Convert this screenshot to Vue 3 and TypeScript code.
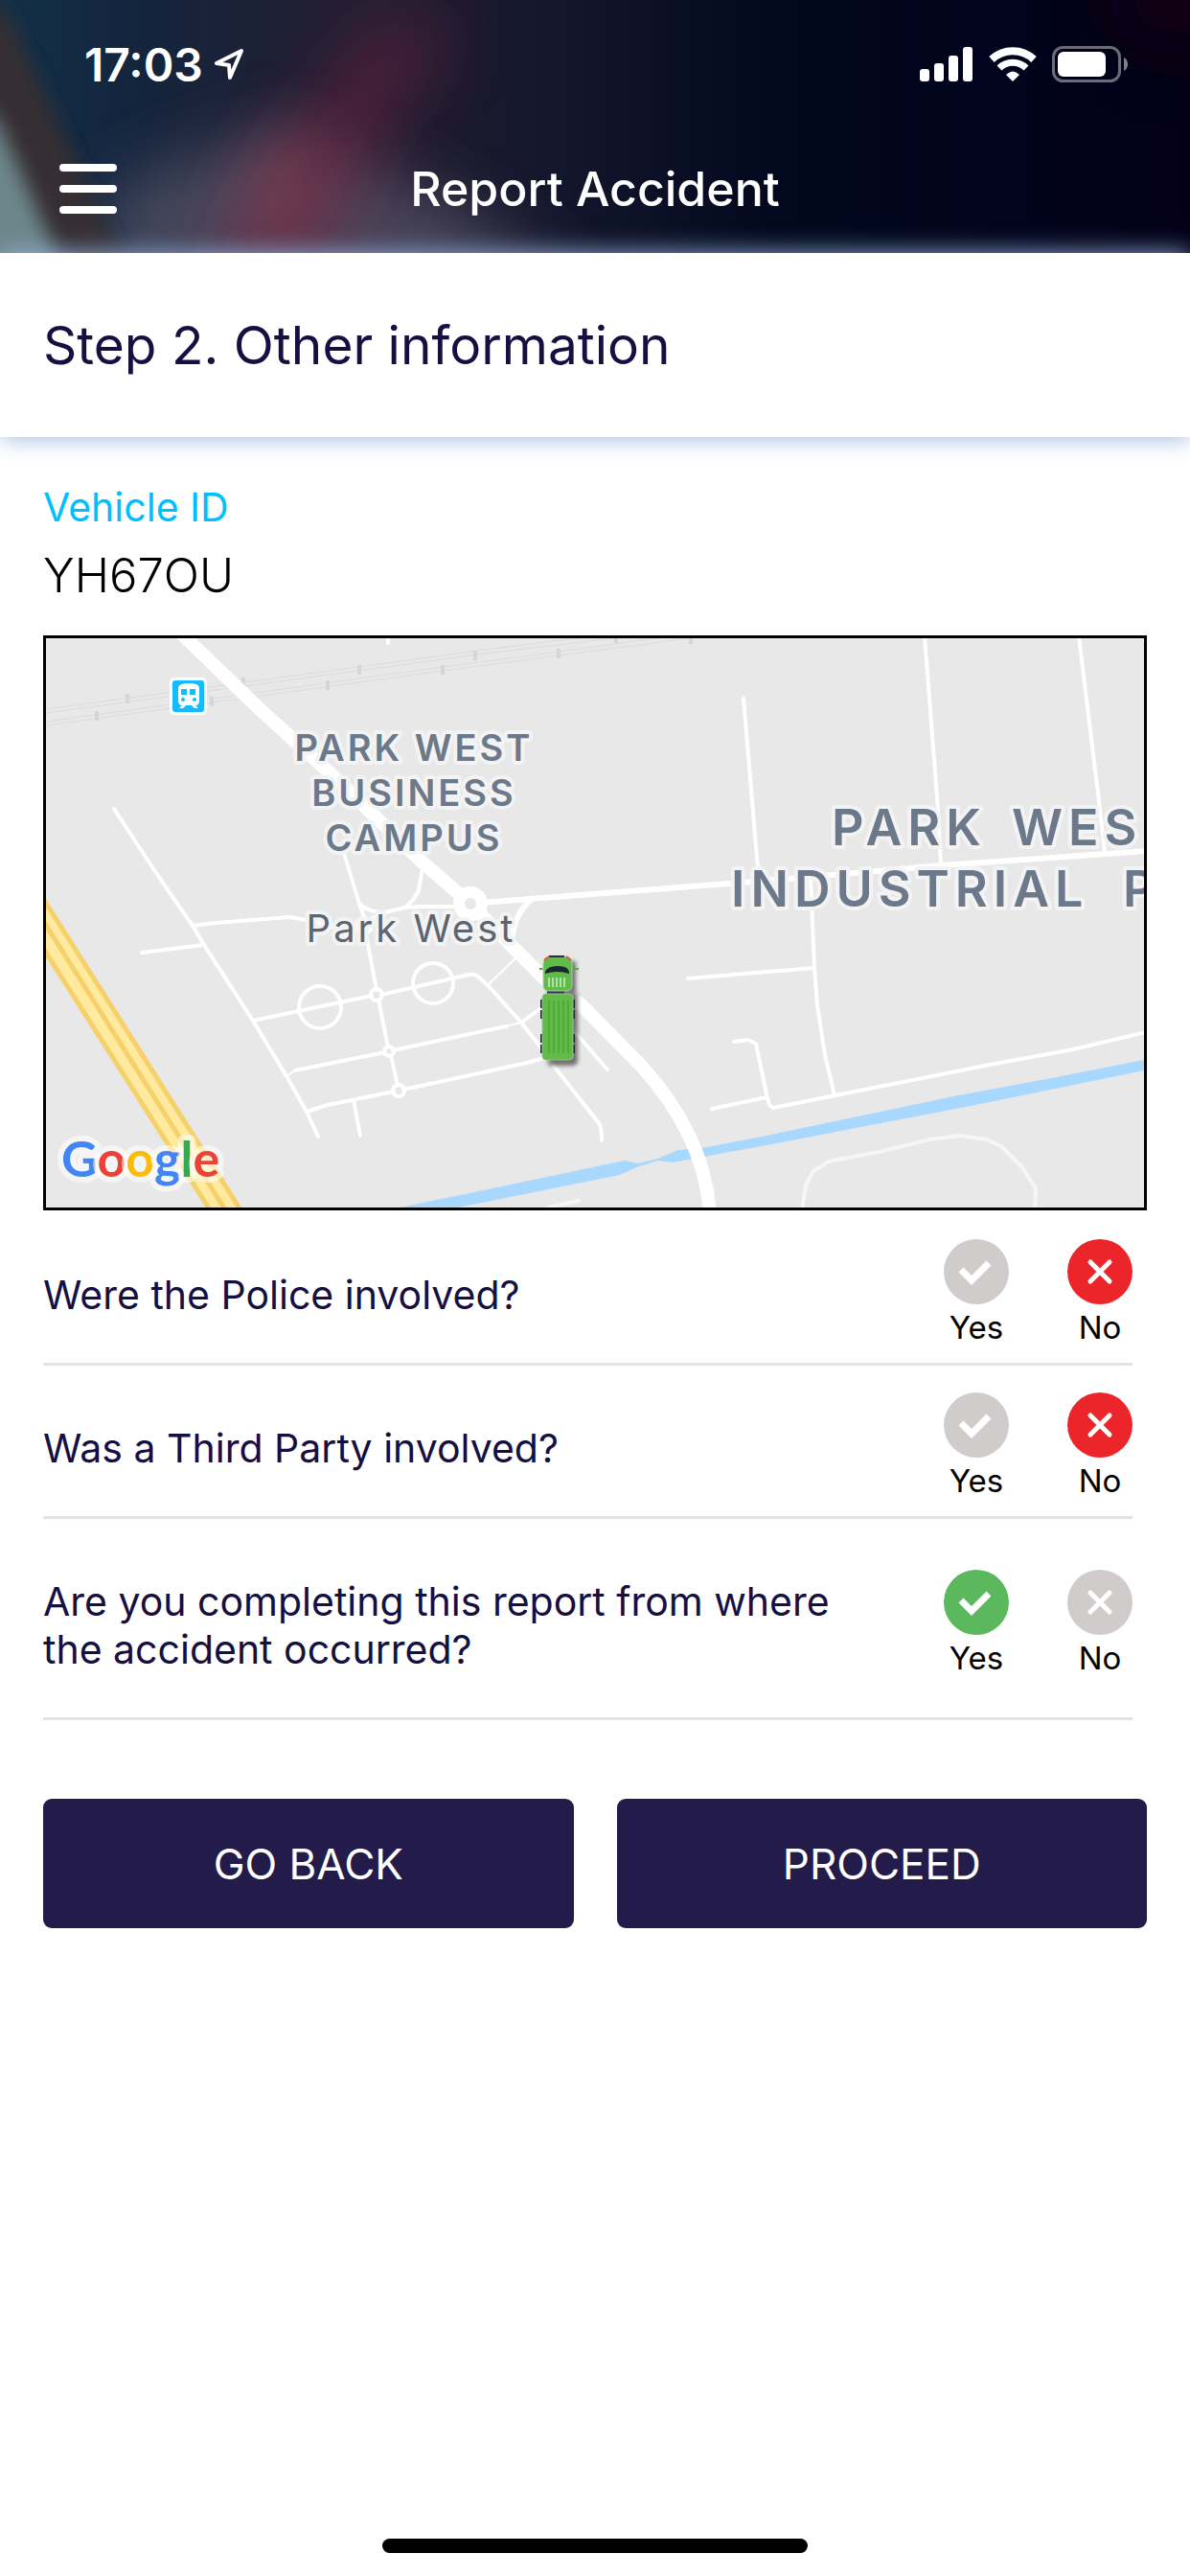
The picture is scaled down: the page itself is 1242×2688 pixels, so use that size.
<script setup lang="ts">
import { ref } from 'vue'

type Answer = 'yes' | 'no'

interface Question {
  id: string
  text: string
  answer: Answer
}

const questions = ref<Question[]>([
  { id: 'police', text: 'Were the Police involved?', answer: 'no' },
  { id: 'third-party', text: 'Was a Third Party involved?', answer: 'no' },
  { id: 'location', text: 'Are you completing this report from where the accident occurred?', answer: 'yes' },
])

const sleepers: [number, number][] = [
  [85, 63], [53, 81], [173, 66], [206, 46], [294, 49], [327, 33],
  [414, 33], [448, 18], [535, 16], [595, 0], [673, 1],
]

const minorRoads: string[] = [
  'M357 -4V5',
  'M71 178L117 248L153 300L165 320L216 399L251 457L272 494L284 520',
  'M153 300L177 297L254 291L279 295L302 302L324 301',
  'M100 328L165 320',
  'M310 221L327 277L332 291M334 309L345 367M347 377L357 427M360 435L367 467',
  'M327 277Q336 286 354 286L375 281L392 280H430M354 286L340 292',
  'M393 240L389 263L384 272L375 281',
  'M216 399L340 373M350 372L402 360L441 351Q447 350 451 353L462 363L496 401L515 425L529 445L577 506Q580 510 580 524',
  'M260 451L354 432M362 430L480 405M496 401L525 380',
  'M272 494L294 487L363 473M373 471L502 443L530 435',
  'M321 482L328 519',
  'M728 63L744 253',
  'M552 411L586 450',
  'M670 355L802 344',
  'M798 249L802 344L805 383L813 435L823 477',
  'M917 -2L930 166L934 236',
  'M1078 -2L1099 170L1105 223',
  'M718 421L733 419L741 423L752 476L755 487L759 490L824 477L985 445L1072 429L1148 411',
  'M695 491L752 479',
]
</script>

<template>
  <div class="screen">
    <header class="header">
      <svg class="backdrop" viewBox="0 0 1242 264" preserveAspectRatio="none" aria-hidden="true">
        <defs>
          <linearGradient id="night" x1="0" x2="1" y1="0" y2="0">
            <stop offset="0" stop-color="#12304a" />
            <stop offset="0.12" stop-color="#14243c" />
            <stop offset="0.3" stop-color="#241e32" />
            <stop offset="0.48" stop-color="#12162c" />
            <stop offset="0.65" stop-color="#02081e" />
            <stop offset="0.85" stop-color="#01041c" />
            <stop offset="1" stop-color="#040018" />
          </linearGradient>
          <filter id="soft" x="-50%" y="-50%" width="200%" height="200%"><feGaussianBlur stdDeviation="10" /></filter>
          <filter id="softer" x="-100%" y="-100%" width="300%" height="300%"><feGaussianBlur stdDeviation="34" /></filter>
        </defs>
        <rect width="1242" height="264" fill="url(#night)" />
        <path d="M90 290L130 190L300 130L480 220L600 300Z" fill="#5a566a" opacity="0.75" filter="url(#softer)" />
        <path d="M215 300L300 140L400 20L480 30L400 130L330 290Z" fill="#6a2440" opacity="0.6" filter="url(#softer)" />
        <ellipse cx="290" cy="200" rx="34" ry="66" fill="#a04450" opacity="0.4" filter="url(#softer)" transform="rotate(22 290 200)" />
        <path d="M-30 10L6 10L140 300L-30 300Z" fill="#362d31" filter="url(#soft)" />
        <path d="M-40 90L0 130L74 300L-40 300Z" fill="#6d868a" filter="url(#soft)" />
        <ellipse cx="1242" cy="0" rx="90" ry="60" fill="#120010" opacity="0.7" filter="url(#softer)" />
      </svg>

      <div class="status">
        <div class="clock">
          <span>17:03</span>
          <svg width="34" height="36" viewBox="0 0 34 36" aria-hidden="true">
            <path d="M30 4L4 17L17 19L18 32Z" fill="none" stroke="#fff" stroke-width="4" stroke-linejoin="round" />
          </svg>
        </div>
        <div class="signals">
          <svg width="56" height="38" viewBox="0 0 56 38" fill="#fff" aria-hidden="true">
            <rect x="0" y="24" width="10" height="13" rx="3" />
            <rect x="15" y="18" width="10" height="19" rx="3" />
            <rect x="30" y="10" width="10" height="27" rx="3" />
            <rect x="45" y="1" width="10" height="36" rx="3" />
          </svg>
          <svg width="50" height="38" viewBox="0 0 50 38" aria-hidden="true">
            <path d="M3 14A32 32 0 0 1 47 14" fill="none" stroke="#fff" stroke-width="8" />
            <path d="M11 23A20 20 0 0 1 39 23" fill="none" stroke="#fff" stroke-width="7" />
            <path d="M18 30Q25 23 32 30L25 37Z" fill="#fff" />
          </svg>
          <svg width="80" height="38" viewBox="0 0 80 38" aria-hidden="true">
            <rect x="1.5" y="1.5" width="69" height="35" rx="10" fill="none" stroke="#fff" stroke-opacity="0.42" stroke-width="3" />
            <rect x="6" y="6" width="50" height="26" rx="6" fill="#fff" />
            <path d="M75 12Q79 14 79 19T75 26Z" fill="#fff" fill-opacity="0.5" />
          </svg>
        </div>
      </div>

      <nav class="nav">
        <button class="menu" type="button" aria-label="Menu">
          <span></span><span></span><span></span>
        </button>
        <h1>Report Accident</h1>
      </nav>
    </header>

    <section class="step">
      <h2>Step 2. Other information</h2>
    </section>

    <main class="content">
      <dl class="vehicle">
        <dt>Vehicle ID</dt>
        <dd>YH67OU</dd>
      </dl>

      <div class="map">
        <svg viewBox="0 0 1146 594" preserveAspectRatio="xMidYMid slice" role="img" aria-label="Map of vehicle location">
          <rect width="1146" height="594" fill="#e8e8e8" />
          <g fill="none" stroke="#dadcdc" stroke-width="1">
            <path d="M0 74L392 21L449 13L570 -2" />
            <path d="M0 78L392 25L449 17L600 -1" />
            <path d="M0 87L392 33L535 14L650 -2" />
            <path d="M0 91L392 37L535 18L680 -1" />
          </g>
          <rect v-for="[x, y] in sleepers" :key="`${x}-${y}`" :x="x - 2" :y="y - 5" width="4" height="10" fill="#d4d6db" />

          <path d="M369 594L452 577L604 545L617 548L639 543L659 534L685 532L752 519L952 477L1039 461L1146 440V451L985 484L752 529L654 547L639 545L619 551L599 560L430 594Z" fill="#a9d8ff" />

          <path d="M0 274L204 594H169L0 330Z" fill="#ffeaa0" />
          <path d="M-4 270L204 598M-4 322L172 598M-4 293L188 598" fill="none" stroke="#f6d06b" stroke-width="5" />

          <g fill="none" stroke="#fff" stroke-linecap="round" stroke-linejoin="round">
            <path v-for="road in minorRoads" :key="road" :d="road" stroke-width="4" />
            <path d="M251 457L260 451M480 405L496 401M490 334L461 362" stroke-width="2" />
            <path d="M505 274Q486 292 487 316" stroke-width="6" />
            <path d="M455 276L505 272L752 253L935 237L1150 222" stroke-width="6" />
            <path d="M789 598L793 571L801 556L817 546L869 536L922 523L954 519L982 523L997 530L1019 552L1033 574L1032 598M525 594L532 592L556 587" stroke="#f6f6f6" stroke-width="4" />
            <path d="M140 -6L222 73L300 144L392 233L443 277L485 320L519 354L559 383L622 447C650 478 688 530 693 600" stroke-width="14" stroke-linecap="butt" />
            <circle cx="286" cy="385" r="22" stroke-width="4" />
            <circle cx="404" cy="360" r="21" stroke-width="4" />
            <circle cx="332" cy="300" r="8" stroke-width="4" />
            <circle cx="345" cy="372" r="6" stroke-width="4" />
            <circle cx="358" cy="431" r="5" stroke-width="4" />
            <circle cx="368" cy="472" r="6" stroke-width="4" />
            <circle cx="443" cy="277" r="12" fill="#e8e8e8" stroke-width="12" />
          </g>

          <g>
            <rect x="129" y="41" width="39" height="39" rx="5" fill="#fff" />
            <rect x="132" y="44" width="33" height="33" rx="3" fill="#12bcff" />
            <path d="M138 52Q138 47 149 47T160 52V65Q160 70 156 70L159 73H155L152 70H146L143 73H139L142 70Q138 70 138 65Z" fill="#fff" />
            <path d="M141 53H147V59H141ZM150 53H156V59H150Z" fill="#12bcff" />
            <circle cx="143" cy="64" r="2" fill="#12bcff" />
            <circle cx="155" cy="64" r="2" fill="#12bcff" />
          </g>

          <g class="label area">
            <text x="384" y="128">PARK WEST</text>
            <text x="384" y="175">BUSINESS</text>
            <text x="384" y="222">CAMPUS</text>
          </g>
          <text class="label place" x="381" y="317">Park West</text>
          <g class="label district">
            <text y="216"><tspan x="820">PARK </tspan><tspan x="1008">WES</tspan></text>
            <text y="280"><tspan x="715">INDUSTRIAL </tspan><tspan x="1124">P</tspan></text>
          </g>

          <g>
            <path d="M524 337H553V371H555V440Q555 446 549 446H524Z" fill="#222" opacity="0.6" class="shade" />
            <path d="M515 345H556" stroke="#4cae3b" stroke-width="2" />
            <rect x="523" y="364" width="18" height="8" fill="#2a3640" />
            <g fill="#1c2638">
              <rect x="516" y="377" width="36" height="9" />
              <rect x="516" y="388" width="36" height="9" />
              <rect x="516" y="413" width="36" height="9" />
              <rect x="516" y="424" width="36" height="9" />
            </g>
            <path d="M519 340Q519 332 528 332H540Q549 332 549 340V362Q549 368 543 368H525Q519 368 519 362Z" fill="#5fbc46" stroke="#b9c4b4" stroke-width="1" />
            <path d="M525 332H541" stroke="#24303c" stroke-width="2" />
            <path d="M520 336L525 332M548 336L543 332" stroke="#e0553c" stroke-width="2" />
            <path d="M521 350V348Q523 342 534 342T546 348V350Q534 346 521 350Z" fill="#1c2638" />
            <path d="M525 354V364M529 354V364M533 354V364M537 354V364M541 354V364" stroke="#b8dfae" stroke-width="2" />
            <rect x="518" y="371" width="32" height="69" rx="4" fill="#5fbc46" stroke="#a5b5a0" stroke-width="1" />
            <path d="M525 378V433M530 378V433M535 378V433M540 378V433M545 378V433" stroke="#53a83c" stroke-width="2" />
          </g>

          <text class="logo" x="16" y="562"><tspan fill="#4285f4">G</tspan><tspan fill="#ea4335">o</tspan><tspan fill="#fbbc05">o</tspan><tspan fill="#4285f4">g</tspan><tspan fill="#34a853">l</tspan><tspan fill="#ea4335">e</tspan></text>
        </svg>
      </div>

      <form class="questions" @submit.prevent>
        <div
          v-for="q in questions"
          :key="q.id"
          class="question"
          role="radiogroup"
          :aria-labelledby="`${q.id}-text`"
        >
          <p :id="`${q.id}-text`">{{ q.text }}</p>
          <div class="answers">
            <label>
              <span class="choice yes">
                <input v-model="q.answer" type="radio" :name="q.id" value="yes" />
                <svg viewBox="0 0 68 68" aria-hidden="true">
                  <path d="M18 32L29 43L47 25" fill="none" stroke="#fff" stroke-width="7" stroke-linejoin="miter" />
                </svg>
              </span>
              Yes
            </label>
            <label>
              <span class="choice no">
                <input v-model="q.answer" type="radio" :name="q.id" value="no" />
                <svg viewBox="0 0 68 68" aria-hidden="true">
                  <path d="M24 24L44 44M44 24L24 44" fill="none" stroke="#fff" stroke-width="5" stroke-linecap="round" />
                </svg>
              </span>
              No
            </label>
          </div>
        </div>

        <div class="actions">
          <button type="button">GO BACK</button>
          <button type="submit">PROCEED</button>
        </div>
      </form>
    </main>

    <div class="home-indicator"></div>
  </div>
</template>

<style>
body {
  margin: 0;
  background: #fff;
}
</style>

<style scoped>
.screen {
  display: flex;
  flex-direction: column;
  min-height: 100vh;
  background: #fff;
  color: #000;
  font-family: Inter, "Liberation Sans", sans-serif;
}

h1,
h2,
p,
dl,
dd {
  margin: 0;
}

button {
  border: 0;
  font: inherit;
  cursor: pointer;
}

.header {
  position: relative;
  padding-bottom: 4px;
  color: #fff;
  background: #01041c;
}

.backdrop {
  position: absolute;
  inset: 0;
  width: 100%;
  height: 100%;
}

.status {
  position: relative;
  display: flex;
  align-items: center;
  justify-content: space-between;
  height: 134px;
  padding: 0 64px 0 88px;
}

.clock {
  display: flex;
  align-items: center;
  gap: 10px;
  font-size: 48px;
  font-weight: 600;
}

.signals {
  display: flex;
  align-items: center;
  gap: 16px;
}

.nav {
  position: relative;
  display: grid;
  grid-template-columns: 60px 1fr 60px;
  align-items: center;
  height: 126px;
  padding: 0 62px;
}

.nav h1 {
  font-size: 50px;
  font-weight: 500;
  line-height: 60px;
  text-align: center;
}

.menu {
  display: flex;
  flex-direction: column;
  gap: 14px;
  padding: 0;
  background: none;
}

.menu span {
  height: 8px;
  border-radius: 4px;
  background: #fff;
}

.step {
  position: relative;
  padding: 60px 45px;
  background: #fff;
  box-shadow: 0 0 24px #94b0d8;
}

.step h2 {
  color: #160f41;
  font-size: 55px;
  font-weight: 400;
  line-height: 72px;
}

.content {
  flex: 1;
  padding: 48px 45px 0;
}

.vehicle dt {
  color: #00bfff;
  font-size: 41px;
  line-height: 50px;
}

.vehicle dd {
  margin-top: 17px;
  font-size: 49px;
  font-weight: 300;
  line-height: 60px;
}

.map {
  margin-top: 32px;
  border: 3px solid #000;
}

.map svg {
  display: block;
  width: 100%;
}

.label {
  font-weight: 600;
  fill: #6b798b;
  stroke: #f3f3f3;
  stroke-width: 8px;
  stroke-linejoin: round;
  paint-order: stroke;
}

.area {
  font-size: 38px;
  letter-spacing: 3px;
  text-anchor: middle;
}

.place {
  font-size: 40px;
  font-weight: 400;
  letter-spacing: 3px;
  text-anchor: middle;
  fill: #5c6570;
}

.district {
  font-size: 52px;
  letter-spacing: 6px;
}

.shade {
  filter: blur(2px);
}

.logo {
  font-family: Lato, sans-serif;
  font-size: 52px;
  font-weight: 700;
  stroke: rgba(255, 255, 255, 0.55);
  stroke-width: 12px;
  stroke-linejoin: round;
  paint-order: stroke;
}

.questions {
  margin-top: 2px;
}

.question {
  display: flex;
  align-items: center;
  justify-content: space-between;
  margin-right: 15px;
  padding: 28px 0 13px;
  border-bottom: 3px solid #e3e3e3;
}

.question p {
  max-width: 840px;
  padding: 33px 0;
  color: #160f41;
  font-size: 41px;
  line-height: 50px;
}

.answers {
  display: flex;
  gap: 61px;
}

.answers label {
  display: flex;
  flex-direction: column;
  align-items: center;
  width: 68px;
  font-size: 33px;
  line-height: 48px;
  cursor: pointer;
}

.choice {
  display: grid;
  width: 68px;
  height: 68px;
}

.choice input,
.choice svg {
  grid-area: 1 / 1;
  width: 68px;
  height: 68px;
  margin: 0;
}

.choice svg {
  pointer-events: none;
}

.choice input {
  appearance: none;
  border-radius: 50%;
  background: #d0cccb;
}

.yes input:checked {
  background: #5cb85c;
}

.no input:checked {
  background: #eb2529;
}

.actions {
  display: flex;
  gap: 45px;
  margin-top: 82px;
}

.actions button {
  flex: 1;
  height: 135px;
  border-radius: 9px;
  background: #231c4b;
  color: #fff;
  font-size: 44px;
}

.home-indicator {
  width: 444px;
  height: 15px;
  margin: 24px auto;
  border-radius: 8px;
  background: #000;
}
</style>
